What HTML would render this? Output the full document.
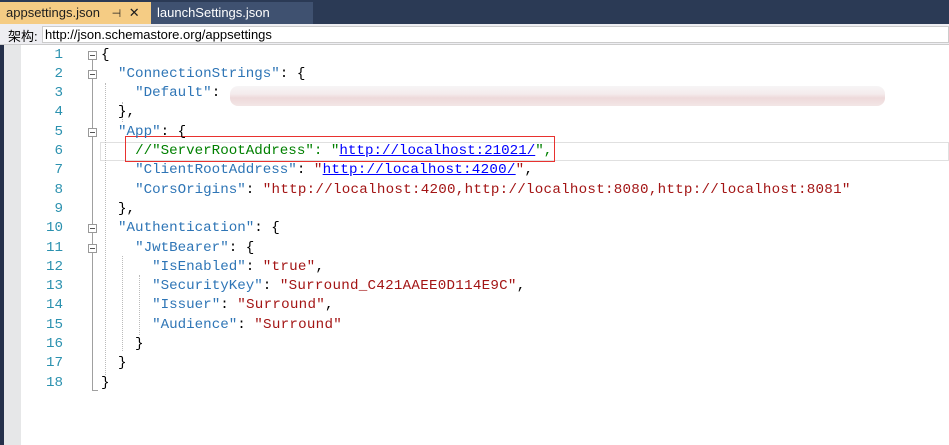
<!DOCTYPE html>
<html><head><meta charset="utf-8"><style>
*{margin:0;padding:0;box-sizing:border-box}
body{width:949px;height:445px;overflow:hidden;background:#fff;position:relative;font-family:"Liberation Sans","Noto Sans CJK SC",sans-serif}
#tabs{position:absolute;left:0;top:0;width:949px;height:24px;background:#2b3a55}
.tab{position:absolute;top:2px;height:22px;font-size:13px;line-height:21px;padding-left:6px}
#t1{left:0;width:151px;background:#f5cc84;color:#1e1e1e}
#t2{left:151px;width:162px;background:#3f5170;color:#fff;top:2px}
#bar{position:absolute;left:0;top:24px;width:949px;height:21px;background:#eeeef2;border-bottom:1px solid #ccc}
#bar span{position:absolute;left:8px;top:2px;font-size:13px}
#url{position:absolute;left:42px;top:2px;right:0;height:17px;background:#fff;border:1px solid #ccc;font-size:13px;line-height:15px;padding-left:2px}
#lnav{position:absolute;left:0;top:45px;width:4px;height:400px;background:#25304a}
#gut{position:absolute;left:4px;top:45px;width:17px;height:400px;background:#e6e7e8}
.ln{position:absolute;left:21px;width:42px;text-align:right;color:#2b91af;font:14.2px "Liberation Mono",monospace}
.cd{position:absolute;left:101px;white-space:pre;font:14.2px "Liberation Mono",monospace;color:#000}
.k{color:#2e75b6}.s{color:#a31515;letter-spacing:.26px}.c{color:#008000}.u{color:#0000ff;text-decoration:underline}
.fold{position:absolute;left:88px;width:9px;height:9px;border:1px solid #999;background:#fff}
.fold:after{content:"";position:absolute;left:1px;top:3px;width:5px;height:1px;background:#555}
.g{position:absolute;border-left:1px dotted #bbb}
</style></head><body>
<div id="tabs">
<div class="tab" id="t1">appsettings.json <span style="margin-left:8px;font-size:11px">⊣</span> <span style="margin-left:4px">✕</span></div>
<div class="tab" id="t2">launchSettings.json</div>
</div>
<div id="bar"><span>架构:</span><div id="url">http://json.schemastore.org/appsettings</div></div>
<div id="lnav"></div><div id="gut"></div>
<div style="position:absolute;left:100px;top:142px;width:849px;height:19px;border:1px solid #e0e0e0"></div>
<div style="position:absolute;left:92px;top:55px;width:1px;height:336px;background:#a0a0a0"></div>
<div style="position:absolute;left:92px;top:390px;width:6px;height:1px;background:#a0a0a0"></div>
<div class="g" style="left:105px;top:83px;height:292px"></div>
<div class="g" style="left:122px;top:102px;height:20px"></div>
<div class="g" style="left:122px;top:256px;height:95px"></div>
<div class="g" style="left:139px;top:275px;height:60px"></div>
<div style="position:absolute;left:230px;top:86px;width:655px;height:20px;border-radius:8px;background:linear-gradient(180deg,#f6f4f5 0%,#f3e9ea 40%,#ecd5d6 60%,#f1e3e3 100%);opacity:.9"></div>
<div style="position:absolute;left:125px;top:136px;width:430px;height:26px;border:1px solid #e8322f"></div>
<div id="lines"></div>
<script>
const L=[
['{',1],
['  <span class=k>"ConnectionStrings"</span>: {',1],
['    <span class=k>"Default"</span>: ',0],
['  },',0],
['  <span class=k>"App"</span>: {',1],
['    <span class=c>//"ServerRootAddress": "<span class=u>http://localhost:21021/</span>",</span>',0],
['    <span class=k>"ClientRootAddress"</span>: <span class=s>"<span class=u>http://localhost:4200/</span>"</span>,',0],
['    <span class=k>"CorsOrigins"</span>: <span class=s>"http://localhost:4200,http://localhost:8080,http://localhost:8081"</span>',0],
['  },',0],
['  <span class=k>"Authentication"</span>: {',1],
['    <span class=k>"JwtBearer"</span>: {',1],
['      <span class=k>"IsEnabled"</span>: <span class=s>"true"</span>,',0],
['      <span class=k>"SecurityKey"</span>: <span class=s>"Surround_C421AAEE0D114E9C"</span>,',0],
['      <span class=k>"Issuer"</span>: <span class=s>"Surround"</span>,',0],
['      <span class=k>"Audience"</span>: <span class=s>"Surround"</span>',0],
['    }',0],
['  }',0],
['}',0]];
let h='';
L.forEach((l,i)=>{const t=45.5+i*19.3;
h+=`<div class=ln style="top:${t}px;line-height:19.3px">${i+1}</div><div class=cd style="top:${t}px;line-height:19.3px">${l[0]}</div>`;
if(l[1])h+=`<div class=fold style="top:${t+5}px"></div>`;});
document.getElementById('lines').innerHTML=h;
</script>
</body></html>
